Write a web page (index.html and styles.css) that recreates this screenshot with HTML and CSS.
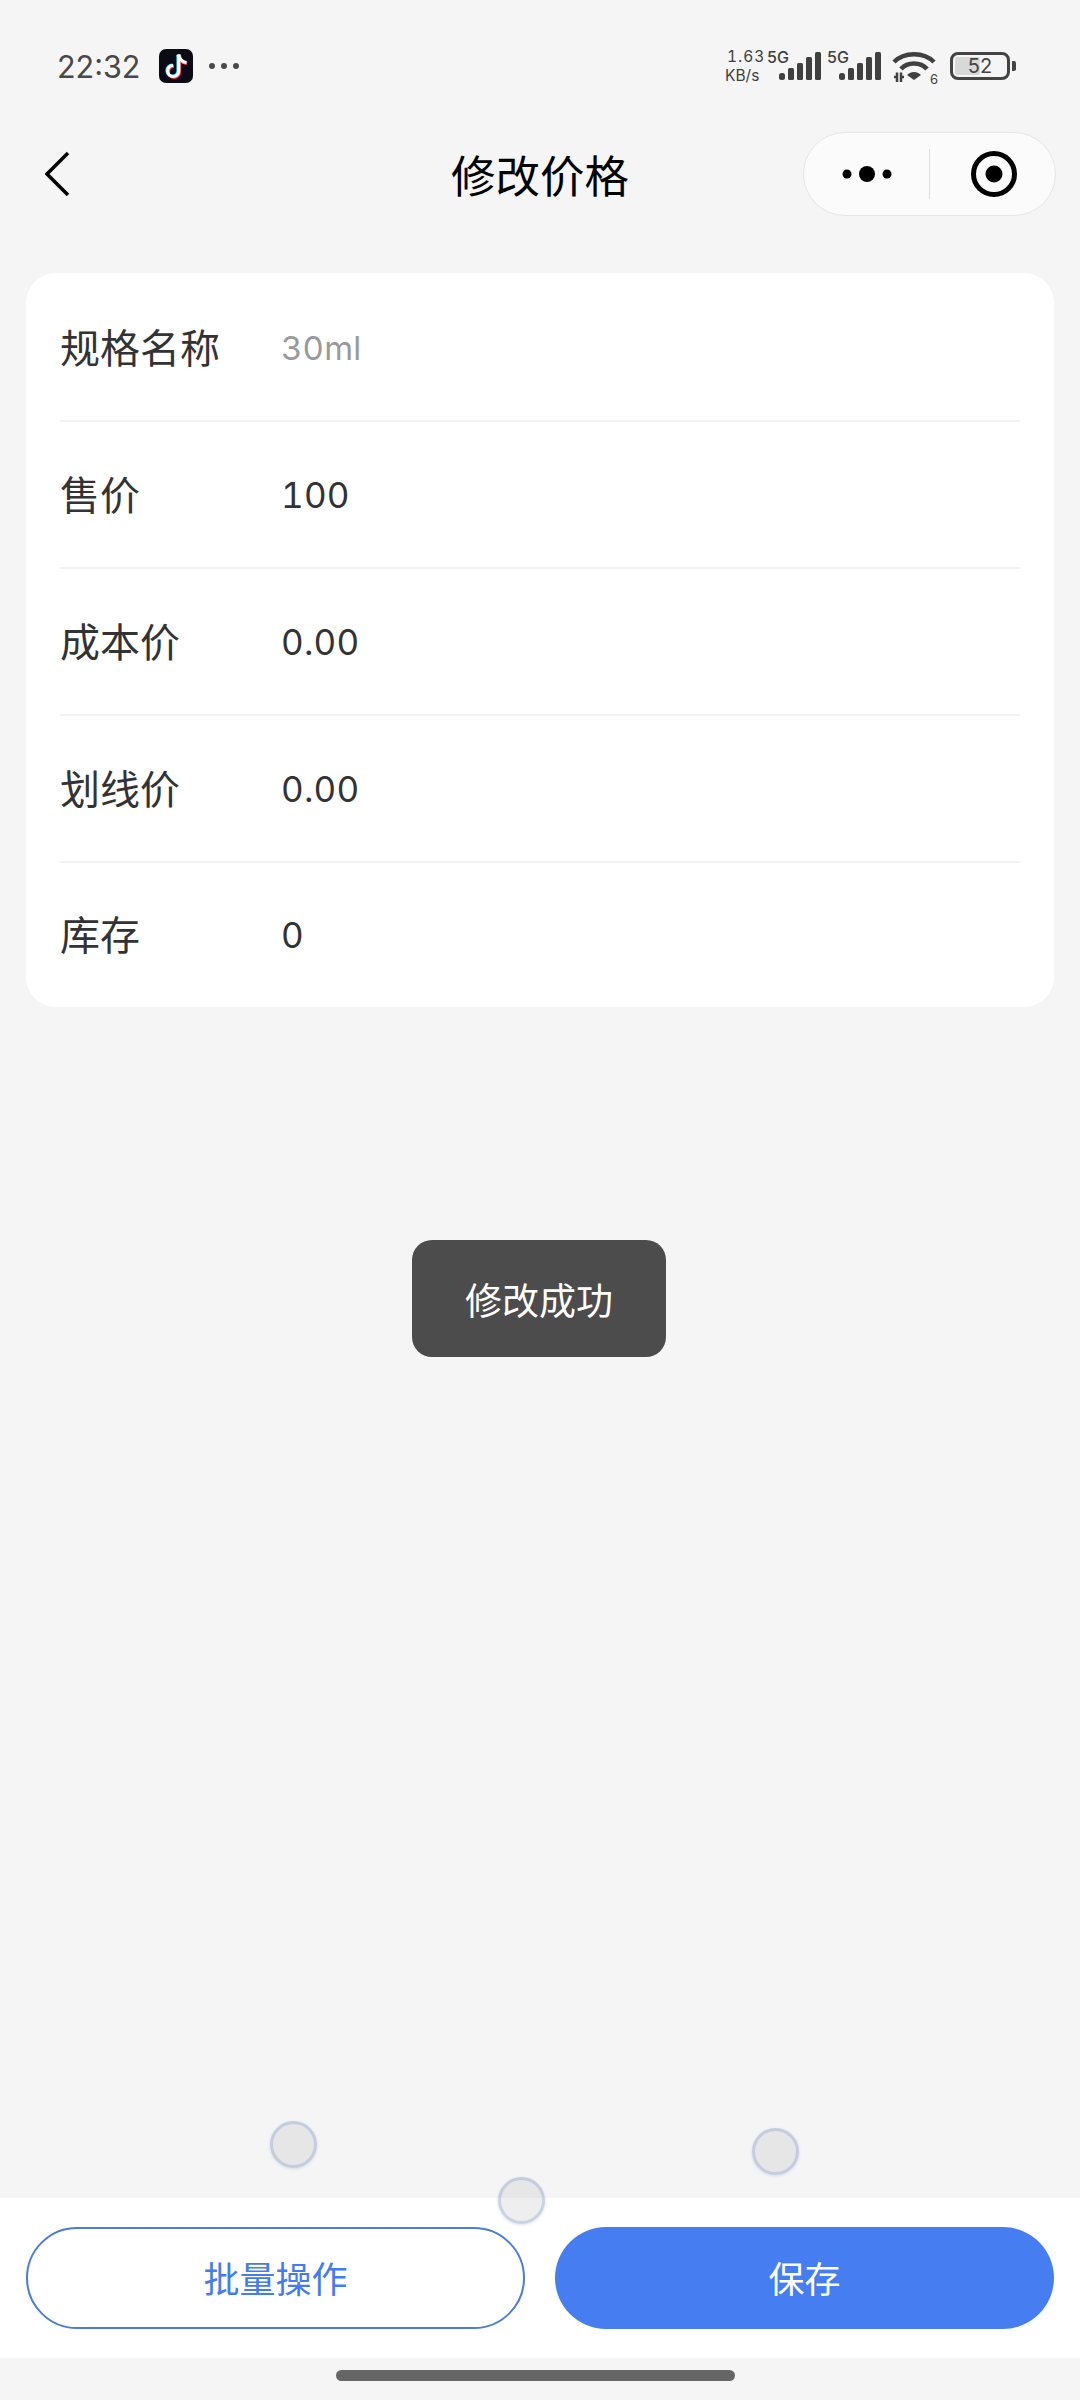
FILE: index.html
```html
<!DOCTYPE html>
<html lang="zh-CN">
<head>
    <meta charset="UTF-8">
    <meta name="viewport" content="width=device-width, initial-scale=1.0">
    <title>修改价格</title>
    <link rel="stylesheet" href="styles.css">
</head>
<body>
    <div class="page">
        <div class="status-bar">
            <div class="status-left">
                <span class="time">22:32</span>
                <svg class="tiktok" width="34" height="34" viewBox="0 0 34 34">
                    <rect width="34" height="34" rx="7" fill="#0b0b16"/>
                    <g class="note note-cyan"><path d="M19 6V21.5A5.5 5.5 0 1 1 13.5 16"/><path d="M19 6C19.5 10.5 23 13.5 27 14"/></g>
                    <g class="note note-red"><path d="M20.5 6.5V23A5.5 5.5 0 1 1 15 17.5"/><path d="M20.5 6.5C21 11 24.5 14 28 14.5"/></g>
                    <g class="note note-white"><path d="M19.7 5.5V22A5.5 5.5 0 1 1 14.2 16.5"/><path d="M19.7 5.5C20.2 10 23.7 13 27.5 13.5"/></g>
                </svg>
                <svg class="more-dots" width="32" height="8" viewBox="0 0 32 8">
                    <circle cx="4" cy="4" r="3" fill="#4a4a4a"/>
                    <circle cx="16" cy="4" r="3" fill="#4a4a4a"/>
                    <circle cx="28" cy="4" r="3" fill="#4a4a4a"/>
                </svg>
            </div>
            <div class="status-right">
                <div class="net-speed"><span class="net-speed-num">1.63</span><span>KB/s</span></div>
                <div class="signal">
                    <span class="signal-label">5G</span>
                    <svg width="42" height="28" viewBox="0 0 42 28">
                        <rect x="0" y="21" width="6" height="7" rx="2.5" fill="#404040"/>
                        <rect x="9" y="16" width="6" height="12" rx="1.5" fill="#404040"/>
                        <rect x="18" y="11" width="6" height="17" rx="1.5" fill="#404040"/>
                        <rect x="27" y="5" width="6" height="23" rx="1.5" fill="#404040"/>
                        <rect x="36" y="0" width="6" height="28" rx="1.5" fill="#404040"/>
                    </svg>
                </div>
                <div class="signal">
                    <span class="signal-label">5G</span>
                    <svg width="42" height="28" viewBox="0 0 42 28">
                        <rect x="0" y="21" width="6" height="7" rx="2.5" fill="#404040"/>
                        <rect x="9" y="16" width="6" height="12" rx="1.5" fill="#404040"/>
                        <rect x="18" y="11" width="6" height="17" rx="1.5" fill="#404040"/>
                        <rect x="27" y="5" width="6" height="23" rx="1.5" fill="#404040"/>
                        <rect x="36" y="0" width="6" height="28" rx="1.5" fill="#404040"/>
                    </svg>
                </div>
                <div class="wifi">
                    <svg width="44" height="32" viewBox="0 0 44 32">
                        <path d="M2 11C12 0.500 32 0.500 42 11" fill="none" stroke="#404040" stroke-width="4.500"/>
                        <path d="M9 18C15.500 10.500 28.500 10.500 35 18" fill="none" stroke="#404040" stroke-width="4.500"/>
                        <path d="M15 24C19 20 25 20 29 24L22 29Z" fill="#404040"/>
                        <path d="M2 26H5M5 21.500V31M9 31V21.500M9 26H12" fill="none" stroke="#404040" stroke-width="2.500"/>
                    </svg>
                    <span class="wifi-num">6</span>
                </div>
                <div class="battery">
                    <div class="battery-body">
                        <div class="battery-fill"></div>
                        <span class="battery-num">52</span>
                    </div>
                    <div class="battery-nub"></div>
                </div>
            </div>
        </div>

        <div class="nav-bar">
            <svg class="back" width="26" height="46" viewBox="0 0 26 46">
                <path d="M23 2L2 23L23 44" fill="none" stroke="#000" stroke-width="3.500"/>
            </svg>
            <h1 class="nav-title">修改价格</h1>
            <div class="capsule">
                <div class="capsule-part">
                    <svg width="50" height="18" viewBox="0 0 50 18">
                        <circle cx="5" cy="9" r="4.500"/>
                        <circle cx="25" cy="9" r="8"/>
                        <circle cx="45" cy="9" r="4.500"/>
                    </svg>
                </div>
                <div class="capsule-line"></div>
                <div class="capsule-part capsule-part-right">
                    <svg width="48" height="48" viewBox="0 0 48 48">
                        <circle cx="24" cy="24" r="20.500" fill="none" stroke="#000" stroke-width="5"/>
                        <circle cx="24" cy="24" r="8.500"/>
                    </svg>
                </div>
            </div>
        </div>

        <div class="main">
            <div class="card">
                <div class="row">
                    <span class="row-label">规格名称</span>
                    <span class="row-value row-value-muted">30ml</span>
                </div>
                <div class="row">
                    <span class="row-label">售价</span>
                    <span class="row-value">100</span>
                </div>
                <div class="row">
                    <span class="row-label">成本价</span>
                    <span class="row-value">0.00</span>
                </div>
                <div class="row">
                    <span class="row-label">划线价</span>
                    <span class="row-value">0.00</span>
                </div>
                <div class="row">
                    <span class="row-label">库存</span>
                    <span class="row-value">0</span>
                </div>
            </div>
        </div>

        <div class="bottom-bar">
            <button type="button" class="btn btn-outline">批量操作</button>
            <button type="button" class="btn btn-primary">保存</button>
        </div>
        <div class="home-area">
            <div class="home-bar"></div>
        </div>

        <div class="toast">修改成功</div>
        <div class="touch touch-1"></div>
        <div class="touch touch-2"></div>
        <div class="touch touch-3"></div>
    </div>
</body>
</html>
```

FILE: styles.css
```css
* {
    box-sizing: border-box;
}

body {
    margin: 0;
    background-color: #f5f5f5;
    font-family: "Noto Sans CJK SC", "Inter", sans-serif;
}

.page {
    position: relative;
    width: 1080px;
    height: 2400px;
    display: flex;
    flex-direction: column;
    overflow: hidden;
}

.status-bar {
    height: 132px;
    padding: 49px 64px 0 57px;
    display: flex;
    justify-content: space-between;
    align-items: flex-start;
    font-family: "Inter", sans-serif;
}

.status-left {
    display: flex;
    align-items: center;
    height: 34px;
}

.time {
    width: 102px;
    font-size: 30.5px;
    color: #484848;
}

.more-dots {
    margin-left: 15px;
}

.note {
    fill: none;
    stroke-width: 3.2;
}

.note-cyan {
    stroke: #25f4ee;
}

.note-red {
    stroke: #fe2c55;
}

.note-white {
    stroke: #fff;
}

.status-right {
    display: flex;
    align-items: flex-start;
    height: 34px;
    color: #404040;
}

.net-speed {
    width: 42px;
    margin-top: -2px;
    display: flex;
    flex-direction: column;
    font-size: 15.5px;
    line-height: 19px;
}

.net-speed-num {
    padding-left: 2px;
    letter-spacing: 1px;
    font-variant-numeric: tabular-nums;
}

.signal {
    position: relative;
    width: 60px;
    height: 31px;
    padding: 3px 0 0 12px;
}

.signal-label {
    position: absolute;
    left: 0;
    top: 0;
    font-size: 16px;
    font-weight: 500;
    line-height: 17px;
}

.signal svg {
    display: block;
}

.wifi {
    position: relative;
    width: 44px;
    height: 32px;
    margin: 2px 14px 0 5px;
}

.wifi svg {
    display: block;
}

.wifi-num {
    position: absolute;
    right: -2px;
    bottom: -3px;
    padding-left: 1px;
    font-size: 13px;
    line-height: 14px;
    background-color: #f5f5f5;
}

.battery {
    display: flex;
    align-items: center;
    margin-top: 3px;
}

.battery-body {
    position: relative;
    width: 60px;
    height: 28px;
    padding: 2px;
    border: 3px solid #444;
    border-radius: 8px;
}

.battery-fill {
    width: 25px;
    height: 100%;
    background-color: #d8d8d8;
    border-radius: 2px;
}

.battery-num {
    position: absolute;
    top: 0;
    left: 0;
    width: 100%;
    text-align: center;
    font-size: 20px;
    line-height: 22px;
    color: #444;
}

.battery-nub {
    width: 4px;
    height: 10px;
    margin-left: 2px;
    background-color: #444;
    border-radius: 0 2px 2px 0;
}

.nav-bar {
    position: relative;
    height: 84px;
    padding: 0 24px 0 45px;
    display: flex;
    justify-content: space-between;
    align-items: center;
}

.nav-title {
    position: absolute;
    top: 0;
    left: 0;
    width: 100%;
    margin: 0;
    text-align: center;
    font-size: 44.5px;
    font-weight: 400;
    line-height: 84px;
    color: #000;
}

.capsule {
    position: relative;
    width: 253px;
    height: 84px;
    display: flex;
    align-items: center;
    background-color: #fbfbfb;
    border: 1px solid #e6e6e6;
    border-radius: 42px;
}

.capsule-part {
    width: 125px;
    display: flex;
    justify-content: center;
    align-items: center;
}

.capsule-part svg {
    display: block;
}

.capsule-part-right {
    padding-left: 3px;
}

.capsule-line {
    width: 1px;
    height: 50px;
    background-color: #ddd;
}

.main {
    flex: 1;
    padding: 57px 26px 0;
}

.card {
    padding: 2px 34px 0;
    background-color: #fff;
    border-radius: 30px;
}

.row {
    height: 147px;
    display: flex;
    align-items: center;
    border-bottom: 2px solid #f2f2f2;
}

.row:last-child {
    height: 144px;
    border-bottom: none;
}

.row-label {
    width: 221px;
    padding-bottom: 4px;
    font-size: 40px;
    color: #333;
}

.row-value {
    font-family: "Inter", sans-serif;
    font-size: 35px;
    font-variant-numeric: tabular-nums;
    letter-spacing: 0.2px;
    color: #333;
}

.row-value-muted {
    font-size: 33px;
    color: #9a9a9a;
}

.bottom-bar {
    height: 160px;
    padding: 29px 26px 0;
    display: flex;
    justify-content: space-between;
    align-items: flex-start;
    background-color: #fff;
}

.btn {
    height: 102px;
    padding: 0 0 3px;
    border-radius: 51px;
    font-family: inherit;
    font-size: 36px;
}

.btn-outline {
    width: 499px;
    color: #447cf0;
    background-color: #fff;
    border: 2px solid #4a7cd8;
}

.btn-primary {
    width: 499px;
    color: #fff;
    background-color: #467ef2;
    border: none;
}

.home-area {
    height: 42px;
    padding: 12px 0 0 336px;
}

.home-bar {
    width: 399px;
    height: 11px;
    background-color: #666;
    border-radius: 6px;
}

.toast {
    position: absolute;
    left: 412px;
    top: 1240px;
    width: 254px;
    height: 117px;
    padding-top: 1px;
    display: flex;
    justify-content: center;
    align-items: center;
    font-size: 37px;
    color: #fff;
    background-color: #4c4c4c;
    border-radius: 20px;
}

.touch {
    position: absolute;
    width: 47px;
    height: 47px;
    background-color: rgba(170, 170, 170, 0.2);
    border: 3px solid rgba(120, 150, 205, 0.3);
    border-radius: 50%;
    box-shadow: 0 1px 3px rgba(120, 140, 190, 0.25);
}

.touch-1 {
    left: 270px;
    top: 2121px;
}

.touch-2 {
    left: 498px;
    top: 2177px;
}

.touch-3 {
    left: 752px;
    top: 2128px;
}
```
